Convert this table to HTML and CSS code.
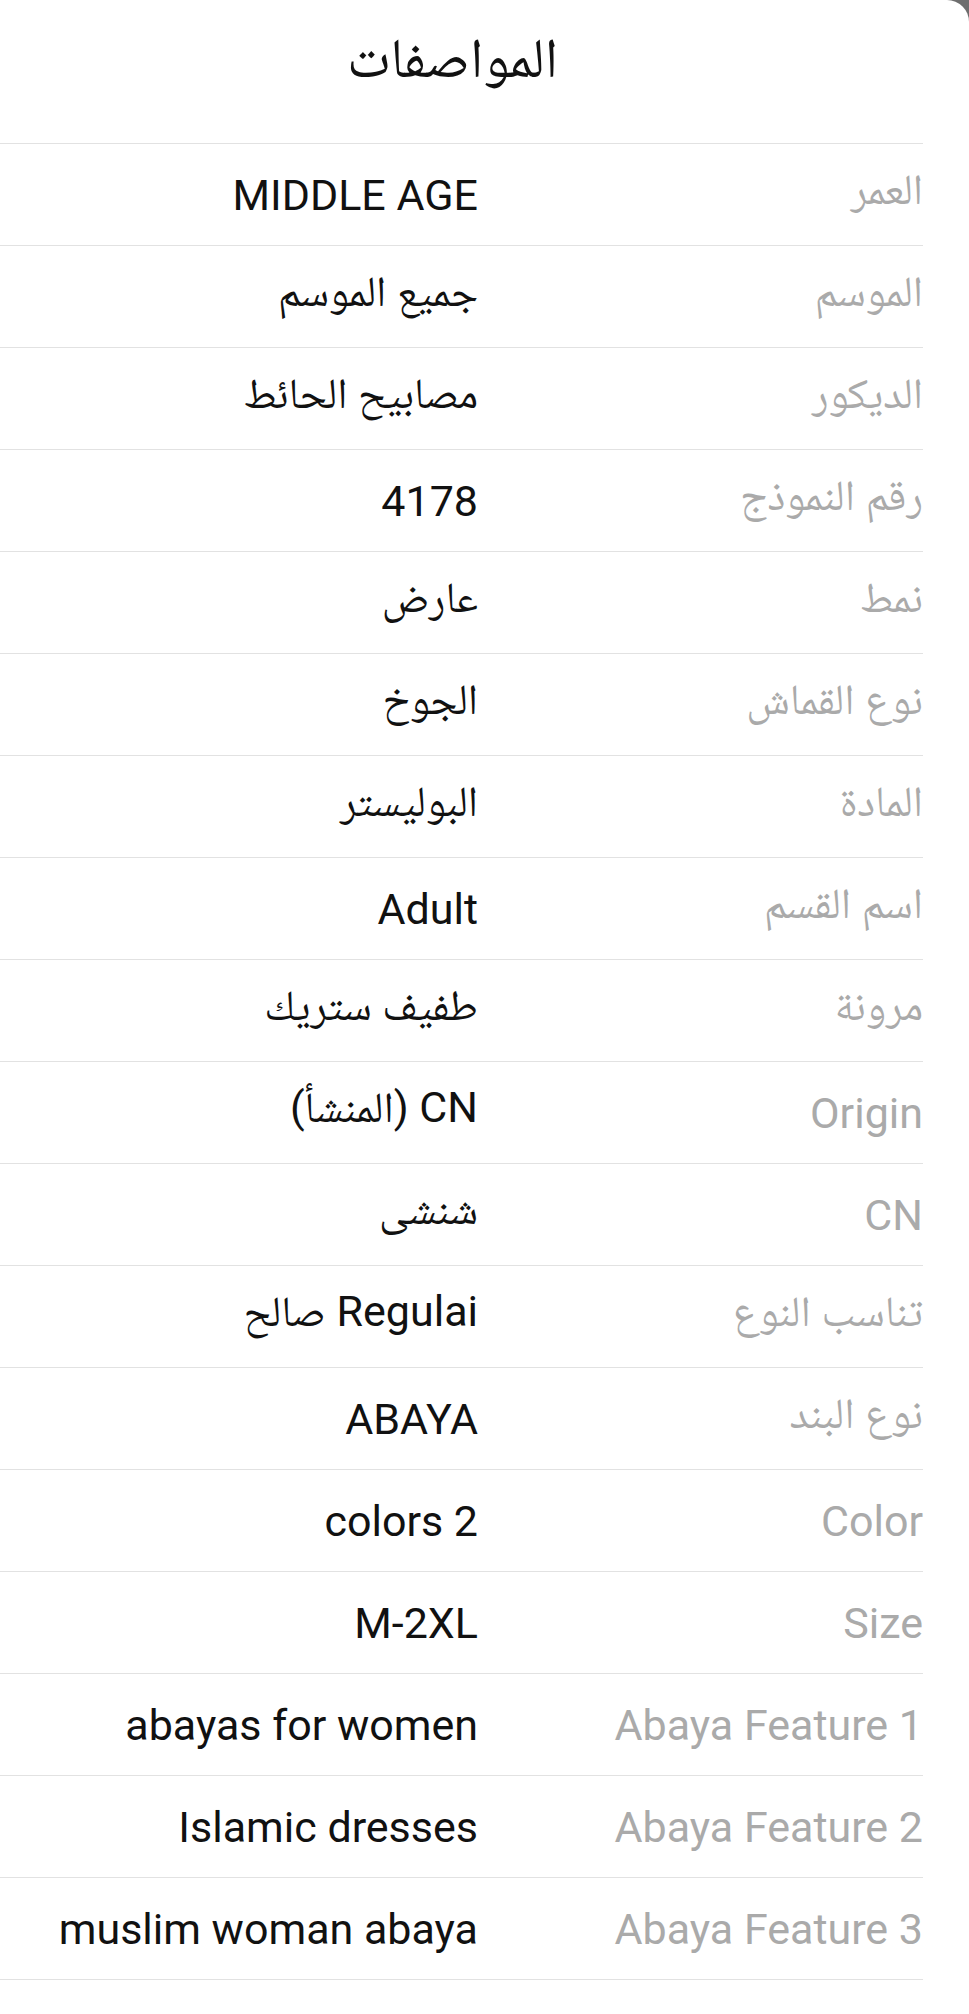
FILE: index.html
```html
<!DOCTYPE html>
<html lang="ar" dir="rtl">
<head>
<meta charset="utf-8">
<title>المواصفات</title>
<link rel="stylesheet" href="styles.css">
</head>
<body>
<div class="sheet">
  <h1 class="title">المواصفات</h1>
  <div class="specs">
    <div class="row"><div class="label">العمر</div><div class="value"><span class="ltr">MIDDLE AGE</span></div></div>
    <div class="row"><div class="label">الموسم</div><div class="value">جميع الموسم</div></div>
    <div class="row"><div class="label">الديكور</div><div class="value">مصابيح الحائط</div></div>
    <div class="row"><div class="label">رقم النموذج</div><div class="value">4178</div></div>
    <div class="row"><div class="label">نمط</div><div class="value">عارض</div></div>
    <div class="row"><div class="label">نوع القماش</div><div class="value">الجوخ</div></div>
    <div class="row"><div class="label">المادة</div><div class="value">البوليستر</div></div>
    <div class="row"><div class="label">اسم القسم</div><div class="value"><span class="ltr">Adult</span></div></div>
    <div class="row"><div class="label">مرونة</div><div class="value">طفيف ستريك</div></div>
    <div class="row"><div class="label"><span class="ltr">Origin</span></div><div class="value">CN (المنشأ)</div></div>
    <div class="row"><div class="label"><span class="ltr">CN</span></div><div class="value">شنشى</div></div>
    <div class="row"><div class="label">تناسب النوع</div><div class="value">Regulai صالح</div></div>
    <div class="row"><div class="label">نوع البند</div><div class="value"><span class="ltr">ABAYA</span></div></div>
    <div class="row"><div class="label"><span class="ltr">Color</span></div><div class="value"><span class="ltr">colors 2</span></div></div>
    <div class="row"><div class="label"><span class="ltr">Size</span></div><div class="value"><span class="ltr">M-2XL</span></div></div>
    <div class="row"><div class="label"><span class="ltr">Abaya Feature 1</span></div><div class="value"><span class="ltr">abayas for women</span></div></div>
    <div class="row"><div class="label"><span class="ltr">Abaya Feature 2</span></div><div class="value"><span class="ltr">Islamic dresses</span></div></div>
    <div class="row"><div class="label"><span class="ltr">Abaya Feature 3</span></div><div class="value"><span class="ltr">muslim woman abaya</span></div></div>
  </div>
</div>
</body>
</html>
```
FILE: styles.css
```css
html {
  background: #6e6e6e;
}
body {
  margin: 0;
  font-family: Roboto, "Noto Naskh Arabic", "Noto Sans Arabic", "DejaVu Sans", sans-serif;
}
.sheet {
  background: #ffffff;
  min-height: 100vh;
  border-top-right-radius: 22px;
  padding-left: 0;
  padding-right: 46px;
}
.title {
  margin: 0;
  height: 143px;
  box-sizing: border-box;
  padding-top: 18px;
  padding-right: 18px;
  line-height: 80px;
  font-size: 56px;
  font-weight: normal;
  text-align: center;
  color: #111;
}
.specs {
  border-bottom: 1px solid #e2e2e2;
}
.row {
  display: grid;
  grid-template-columns: 445px 1fr;
  align-items: center;
  height: 102px;
  box-sizing: border-box;
  border-top: 1px solid #e2e2e2;
  font-size: 43px;
}
.label {
  color: #aaaaaa;
  text-align: right;
}
.value {
  color: #111111;
  text-align: right;
  white-space: nowrap;
}
.ltr {
  direction: ltr;
  unicode-bidi: isolate;
}
```
